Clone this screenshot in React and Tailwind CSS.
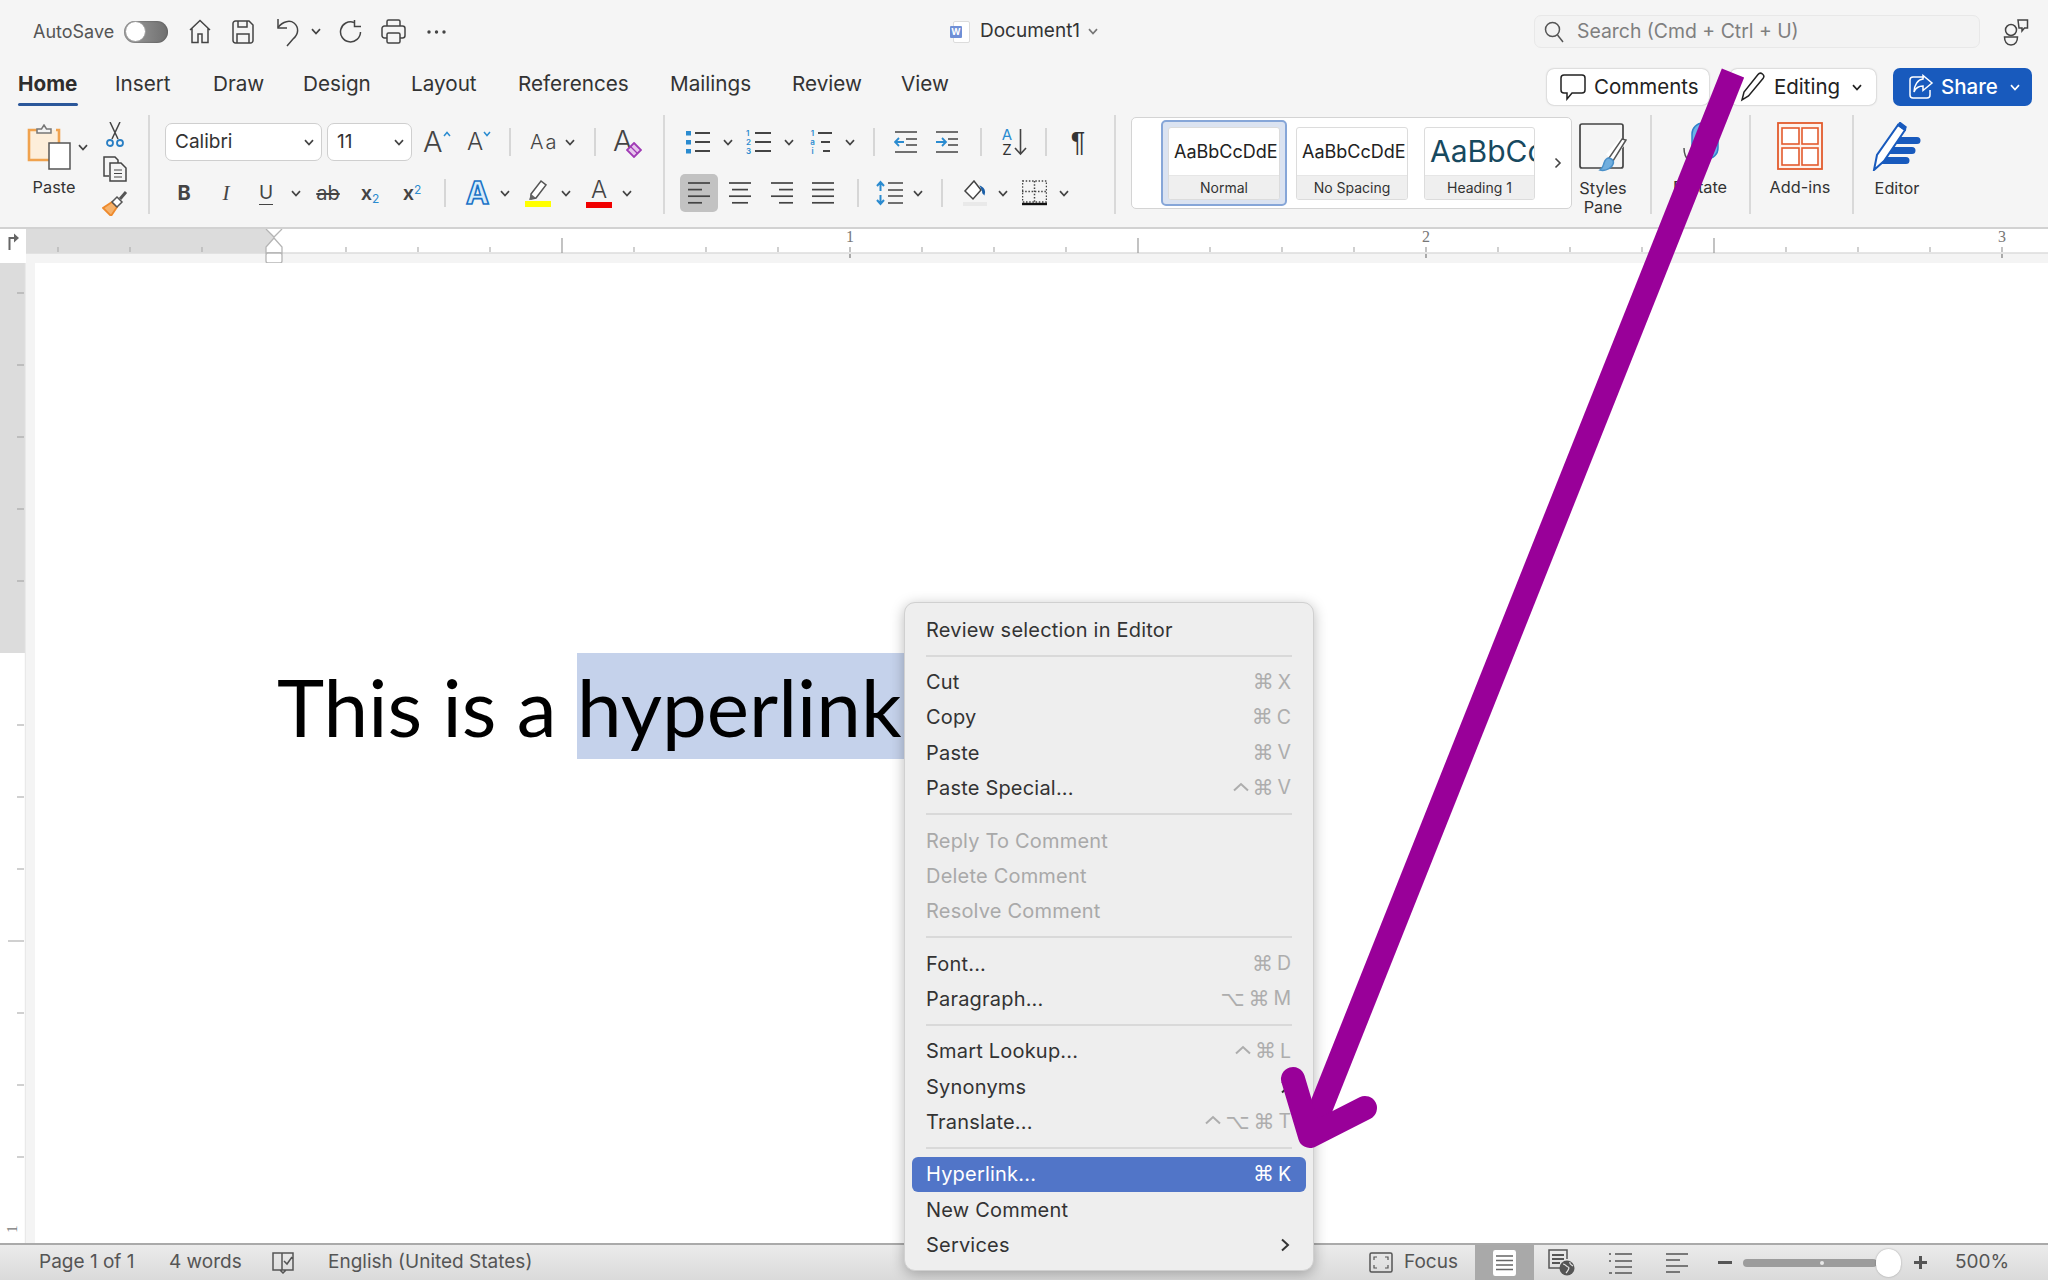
import React from "react";

const Chev = ({ className = "", color = "#444" }) => (
  <svg width="10" height="7" viewBox="0 0 10 7" className={"shrink-0 " + className}>
    <path d="M1 1.2 5 5.5 9 1.2" fill="none" stroke={color} strokeWidth="1.7" />
  </svg>
);

const RowSep = ({ className = "" }) => <div className={"w-[2px] h-[28px] shrink-0 bg-[#d6d6d6] " + className} />;
const GroupSep = () => <div className="w-[2px] h-[99px] mt-[11px] shrink-0 bg-[#d9d9d9]" />;

const Ic = ({ w, h, className = "", children }) => (
  <svg width={w} height={h} viewBox={`0 0 ${w} ${h}`} fill="none" stroke="#444" strokeWidth="1.5" className={"shrink-0 " + className}>
    {children}
  </svg>
);

const AlignIcon = ({ kind, className = "" }) => {
  const rows = {
    left: [[0, 22], [0, 14], [0, 22], [0, 14]],
    center: [[0, 22], [3, 19], [0, 22], [3, 19]],
    right: [[0, 22], [8, 22], [0, 22], [8, 22]],
    just: [[0, 22], [0, 22], [0, 22], [0, 22]],
  }[kind];
  return (
    <Ic w={22} h={26} className={className}>
      {rows.map((r, i) => (
        <line key={i} x1={r[0]} x2={r[1]} y1={3 + i * 6.6} y2={3 + i * 6.6} strokeWidth="1.7" />
      ))}
    </Ic>
  );
};

const StyleCard = ({ w, sample, sampleClass, label }) => (
  <div className={"h-[73px] rounded-[3px] border border-[#dcdcdc] bg-white overflow-hidden flex flex-col shrink-0 " + w}>
    <div className={"h-[49px] flex items-center whitespace-nowrap overflow-hidden pl-[5px] " + sampleClass}>{sample}</div>
    <div className="h-[24px] bg-[#efefef] border-t border-[#e6e6e6] flex items-center justify-center text-[14px] text-[#333]">{label}</div>
  </div>
);

const menu = [
  [["Review selection in Editor"]],
  [["Cut", "⌘ X"], ["Copy", "⌘ C"], ["Paste", "⌘ V"], ["Paste Special...", "⌃ ⌘ V"]],
  [["Reply To Comment", null, true], ["Delete Comment", null, true], ["Resolve Comment", null, true]],
  [["Font...", "⌘ D"], ["Paragraph...", "⌥ ⌘ M"]],
  [["Smart Lookup...", "⌃ ⌘ L"], ["Synonyms", ">"], ["Translate...", "⌃ ⌥ ⌘ T"]],
  [["Hyperlink...", "⌘ K", false, true], ["New Comment"], ["Services", ">"]],
];

const Shortcut = ({ value, active }) => (
  <span className={"flex items-center gap-[4px] font-['DejaVu_Sans','Inter',sans-serif] text-[20px] tracking-normal whitespace-nowrap " + (active ? "text-white" : "text-[#adadad]")}>
    {value.split(" ").map((tok) =>
      tok === "⌃" ? (
        <svg key={tok} width="16" height="10" viewBox="0 0 16 10" className="shrink-0 mb-[3px]">
          <path d="M1 8.5 8 2l7 6.5" fill="none" stroke="#adadad" strokeWidth="2" />
        </svg>
      ) : tok === "⌘" || tok === "⌥" ? (
        <span key={tok} className="text-[21px] leading-[24px]">{tok}</span>
      ) : (
        <span key={tok} className="font-['Inter',sans-serif] text-[19.5px]">{tok}</span>
      )
    )}
  </span>
);

const ContextMenu = () => (
  <div className="absolute left-[904px] top-[602px] w-[410px] h-[669px] rounded-[11px] bg-[#eeeeee] border border-[#d0d0d0] shadow-[0_3px_14px_rgba(0,0,0,0.28)] pt-[9px] text-[20px] tracking-[0.2px] font-['Inter',sans-serif]">
    {menu.map((group, gi) => (
      <div key={gi}>
        {gi > 0 && <div className="h-[2px] bg-[#d9d9d9] mx-[21px] my-[7.6px]" />}
        {group.map(([label, sc, disabled, active]) => (
          <div
            key={label}
            className={
              "h-[35.3px] flex items-center justify-between pl-[14px] pr-[15px] mx-[7px] rounded-[6px] " +
              (active ? "bg-[#5175c8] text-white" : disabled ? "text-[#a9a9a9]" : "text-[#333]")
            }
          >
            <span>{label}</span>
            {sc === ">" ? (
              <svg width="10" height="14" viewBox="0 0 10 14" className="mr-[1px]">
                <path d="M2 1.5 8 7 2 12.5" fill="none" stroke="#333" strokeWidth="2" />
              </svg>
            ) : sc ? (
              <Shortcut value={sc} active={active} />
            ) : null}
          </div>
        ))}
      </div>
    ))}
  </div>
);

const RulerH = () => {
  const ticks = [];
  for (let k = -3; k < 25; k++) {
    const x = 248 + 72 * k;
    if (k === 0 || k % 8 === 0) continue;
    if (k % 4 === 0) ticks.push(<line key={k} x1={x} x2={x} y1={9} y2={24} stroke="#9a9a9a" strokeWidth="1.2" />);
    else ticks.push(<line key={k} x1={x} x2={x} y1={18} y2={23} stroke="#b0b0b0" strokeWidth="1.2" />);
  }
  return (
    <svg width="2022" height="34" viewBox="0 0 2022 34" className="block shrink-0">
      <rect x="0" y="0" width="2022" height="24" fill="#ffffff" />
      <rect x="0" y="0" width="248" height="24" fill="#dcdcdc" />
      <rect x="0" y="24" width="2022" height="10" fill="#f4f4f4" />
      <line x1="0" x2="2022" y1="24" y2="24" stroke="#dddddd" strokeWidth="1.5" />
      {ticks}
      {[1, 2, 3].map((n) => (
        <g key={n}>
          <text x={248 + 576 * n} y="13" fontSize="16" fill="#777" textAnchor="middle" fontFamily="Liberation Serif, serif">{n}</text>
          <line x1={248 + 576 * n} x2={248 + 576 * n} y1={18} y2={23} stroke="#9a9a9a" strokeWidth="1.2" />
          <line x1={248 + 576 * n} x2={248 + 576 * n} y1={25} y2={29} stroke="#777" strokeWidth="1.2" />
        </g>
      ))}
      <path d="M240 0 248 8 256 0" fill="#fff" stroke="#b5b5b5" strokeWidth="1.3" />
      <path d="M248 9 256 18V24H240V18Z" fill="#fff" stroke="#b5b5b5" strokeWidth="1.3" />
      <rect x="240" y="24" width="16" height="10" rx="2" fill="#fff" stroke="#b5b5b5" strokeWidth="1.3" />
    </svg>
  );
};

const RulerV = () => {
  const items = [];
  for (let k = 0; k < 14; k++) {
    const y = 30 + 72 * k;
    if (y === 390) continue;
    const tall = y === 678;
    const digit = y === 966;
    if (digit) {
      items.push(<text key={k} x="12" y={y + 5} fontSize="15" fill="#777" textAnchor="middle" transform={`rotate(-90 12 ${y})`} fontFamily="Liberation Serif, serif">1</text>);
    } else {
      items.push(<line key={k} x1={tall ? 8 : 17} x2="24" y1={y} y2={y} stroke={y < 390 ? "#a8a8a8" : "#b0b0b0"} strokeWidth="1.2" />);
    }
  }
  return (
    <svg width="26" height="980" viewBox="0 0 26 980" className="block shrink-0">
      <rect width="26" height="980" fill="#ffffff" />
      <rect width="25" height="390" fill="#dcdcdc" />
      {items}
      <line x1="25.3" x2="25.3" y1="0" y2="980" stroke="#e4e4e4" />
    </svg>
  );
};

export default function App() {
  return (
    <div className="relative w-[2048px] h-[1280px] overflow-hidden bg-[#f5f5f5] font-['Inter',sans-serif] text-[#333]">
      {/* Title bar */}
      <div className="flex items-center h-[63px] pl-[33px]">
        <span className="w-[80px] text-[18px] text-[#555] whitespace-nowrap">AutoSave</span>
        <div className="ml-[11px] w-[44px] h-[22px] rounded-full bg-gradient-to-r from-[#a0a0a0] to-[#6f6f6f] flex items-center pl-[1px] shadow-[inset_0_0_2px_rgba(0,0,0,0.4)]">
          <div className="w-[21px] h-[21px] rounded-full bg-white border border-[#999]" />
        </div>
        <Ic w={24} h={25} className="ml-[20px]">
          <path d="M2 11 12 1.5 22 11M4 9v14.5h6V15h4v8.5h6V9" />
        </Ic>
        <Ic w={22} h={24} className="ml-[20px]">
          <path d="M1 3.5A2.5 2.5 0 0 1 3.5 1H17l4 4v15.5a2.5 2.5 0 0 1-2.5 2.5h-15A2.5 2.5 0 0 1 1 20.5Z" />
          <path d="M6 1v6h9V1M5 23v-9h12v9" />
        </Ic>
        <Ic w={24} h={30} className="ml-[22px]">
          <path d="M2 2v9h9" />
          <path d="M2 10.5C7 4 14 3 18 6c5 4 5 11-1 16l-6 7" />
        </Ic>
        <Chev className="ml-[11px]" />
        <Ic w={23} h={26} className="ml-[18px]">
          <path d="M15 3.5A10 10 0 1 0 21.5 13" />
          <path d="M15.5 1v6.5H22" />
        </Ic>
        <Ic w={25} h={25} className="ml-[19px]">
          <path d="M6 7V2.5A1.5 1.5 0 0 1 7.5 1h10A1.5 1.5 0 0 1 19 2.5V7" />
          <path d="M6 19H3.5A2.5 2.5 0 0 1 1 16.5v-7A2.5 2.5 0 0 1 3.5 7h18A2.5 2.5 0 0 1 24 9.5v7a2.5 2.5 0 0 1-2.5 2.5H19" />
          <rect x="6" y="14" width="13" height="10" rx="1.5" />
        </Ic>
        <Ic w={21} h={6} className="ml-[20px]">
          <circle cx="3" cy="3" r="1.7" fill="#444" stroke="none" />
          <circle cx="10.5" cy="3" r="1.7" fill="#444" stroke="none" />
          <circle cx="18" cy="3" r="1.7" fill="#444" stroke="none" />
        </Ic>
        <div className="ml-[503px] w-[20px] h-[22px] relative shrink-0 flex items-center">
          <div className="absolute left-[3px] top-0 w-[17px] h-[22px] bg-white border border-[#dcdcdc] rounded-[2px]" />
          <div className="relative w-[12px] h-[12px] bg-[#6f8fd6] text-white text-[9px] font-bold leading-[12px] text-center rounded-[1px]">W</div>
        </div>
        <span className="ml-[10px] w-[100px] text-[19px] text-[#333] whitespace-nowrap">Document1</span>
        <Chev className="ml-[8px]" color="#777" />
        <div className="ml-[436px] w-[446px] h-[33px] rounded-[7px] bg-[#f3f3f3] border border-[#e8e8e8] flex items-center pl-[9px] shrink-0">
          <Ic w={20} h={22} className="">
            <circle cx="8.5" cy="8.5" r="7" stroke="#555" />
            <path d="M13.5 14 19 21" stroke="#555" />
          </Ic>
          <span className="ml-[13px] text-[19.4px] text-[#7f7f7f] whitespace-nowrap">Search (Cmd + Ctrl + U)</span>
        </div>
        <Ic w={26} h={28} className="ml-[23px]">
          <circle cx="8" cy="12" r="5.5" />
          <path d="M1.5 19h13c0 4-2 8-6.5 8s-6.5-4-6.5-8Z" />
          <path d="M15 2h9.5v8h-3l-2.5 3v-3h-3Z" />
        </Ic>
      </div>

      {/* Tabs + action buttons */}
      <div className="flex items-start h-[41px] pl-[18px]">
        <div className="flex flex-col pt-[7px] w-[60px]">
          <span className="leading-[28px] text-[20.7px] font-bold text-[#2d2d2d]">Home</span>
          <div className="mt-[5px] h-[3px] rounded-full bg-[#2b579a]" />
        </div>
        {[
          ["Insert", "ml-[37px] w-[61px]"],
          ["Draw", "ml-[37px] w-[52px]"],
          ["Design", "ml-[38px] w-[69px]"],
          ["Layout", "ml-[39px] w-[66px]"],
          ["References", "ml-[41px] w-[111px]"],
          ["Mailings", "ml-[41px] w-[82px]"],
          ["Review", "ml-[40px] w-[70px]"],
          ["View", "ml-[39px] w-[47px]"],
        ].map(([t, c]) => (
          <span key={t} className={"pt-[7px] leading-[28px] text-[20.7px] text-[#333] whitespace-nowrap " + c}>{t}</span>
        ))}
        <div className="ml-auto flex items-center pr-[16px] pt-[5px] text-[20.5px]">
          <div className="w-[162px] h-[36px] rounded-[7px] bg-white shadow-[0_0_2px_rgba(0,0,0,0.35)] flex items-center pl-[13px]">
            <Ic w={26} h={28} className="">
              <path d="M4 2h18a3 3 0 0 1 3 3v12a3 3 0 0 1-3 3H12l-5 6v-6H4a3 3 0 0 1-3-3V5a3 3 0 0 1 3-3Z" stroke="#222" />
            </Ic>
            <span className="ml-[8px] text-[#222]">Comments</span>
          </div>
          <div className="ml-[21px] w-[146px] h-[36px] rounded-[7px] bg-white shadow-[0_0_2px_rgba(0,0,0,0.35)] flex items-center pl-[9px]">
            <Ic w={26} h={30} className="">
              <path d="M3 28 5 20 19 2.5a2.5 2.5 0 0 1 5 4L9.5 24Z" stroke="#222" />
            </Ic>
            <span className="ml-[9px] text-[#222]">Editing</span>
            <Chev className="ml-[12px]" color="#222" />
          </div>
          <div className="ml-[17px] w-[139px] h-[38px] rounded-[7px] bg-[#185abd] flex items-center pl-[15px] text-white">
            <Ic w={26} h={26} className="">
              <path d="M16 3h-11a3 3 0 0 0-3 3v15a3 3 0 0 0 3 3h14a3 3 0 0 0 3-3v-5" stroke="#fff" />
              <path d="M15 5V1.5l9 7.5-9 7.5V12C11 12 8 13 6 18c0-7 4-12.5 9-13Z" stroke="#fff" />
            </Ic>
            <span className="ml-[7px] font-medium">Share</span>
            <Chev className="ml-[12px]" color="#fff" />
          </div>
        </div>
      </div>

      {/* Ribbon */}
      <div className="flex h-[123px] border-b-0">
        {/* Clipboard */}
        <div className="w-[148px] shrink-0 flex">
          <div className="ml-[27px] w-[56px] shrink-0 pt-[20px]">
            <div className="flex items-center">
              <Ic w={44} h={46} className="">
                <path d="M29 6h3v30H2V6h8" stroke="#f0a24e" strokeWidth="2.6" fill="#fdeeda" />
                <path d="M10 9V5h4.5L17 1l2.5 4H24v4Z" stroke="#777" fill="#f3f3f3" />
                <rect x="22" y="19" width="21" height="26" fill="#fff" stroke="#555" />
              </Ic>
              <Chev className="ml-[7px]" />
            </div>
            <div className="mt-[8px] -ml-[21px] w-[96px] text-center text-[16.3px] leading-[19px]">Paste</div>
          </div>
          <div className="ml-[23px] flex flex-col gap-[8px] pt-[18px]">
            <Ic w={18} h={26} className="">
              <path d="M4 0 12 17M14 0 6 17" />
              <circle cx="4" cy="21" r="3" stroke="#2a7fc4" strokeWidth="1.8" />
              <circle cx="14" cy="21" r="3" stroke="#2a7fc4" strokeWidth="1.8" />
            </Ic>
            <Ic w={26} h={26} className="-ml-[4px]">
              <path d="M7 20H2V1h11l3 3v3" />
              <path d="M8 7h11l5 5v13H8Z" />
              <path d="M12 14h8M12 17.5h8M12 21h8" strokeWidth="1.2" />
            </Ic>
            <Ic w={26} h={26} className="-ml-[4px]">
              <path d="M10 12 1 18l8 8 6-9Z" fill="#f6b26b" stroke="#ee8a2c" strokeWidth="1.8" />
              <path d="M10 12 15 17 20 12l-5-5Z" stroke="#555" fill="#fff" />
              <path d="M18 9 24 2" stroke="#555" strokeWidth="3" />
            </Ic>
          </div>
        </div>
        <GroupSep />

        {/* Font */}
        <div className="w-[513px] shrink-0 flex flex-col gap-[13px] pt-[19px]">
          <div className="flex items-center h-[38px]">
            <div className="ml-[15px] w-[157px] h-[38px] rounded-[7px] bg-white border border-[#cfcfcf] flex items-center justify-between pl-[9px] pr-[7px] text-[19px]">
              Calibri<Chev />
            </div>
            <div className="ml-[5px] w-[85px] h-[38px] rounded-[7px] bg-white border border-[#cfcfcf] flex items-center justify-between pl-[9px] pr-[7px] text-[19px]">
              11<Chev />
            </div>
            <div className="ml-[11px] w-[27px] flex items-start text-[29px] font-light leading-[32px] text-[#444]">
              A<svg width="8" height="6" viewBox="0 0 8 6" className="mt-[5px] shrink-0"><path d="M1 5 4 1.5 7 5" fill="none" stroke="#2a8bd0" strokeWidth="1.5" /></svg>
            </div>
            <div className="ml-[17px] w-[25px] flex items-start text-[24px] font-light leading-[32px] text-[#444]">
              A<svg width="8" height="6" viewBox="0 0 8 6" className="mt-[5px] shrink-0"><path d="M1 1 4 4.5 7 1" fill="none" stroke="#2a8bd0" strokeWidth="1.5" /></svg>
            </div>
            <RowSep className="ml-[17px]" />
            <span className="ml-[19px] w-[30px] text-[20px] tracking-[2px] font-light whitespace-nowrap text-[#444]">Aa</span>
            <Chev className="ml-[5px]" />
            <RowSep className="ml-[19px]" />
            <div className="ml-[17px] w-[29px] h-[32px] relative shrink-0 text-[29px] font-light leading-[30px] text-[#444]">
              A
              <svg width="16" height="16" viewBox="0 0 16 16" className="absolute right-0 bottom-0">
                <path d="M8 1 15 8 8 15 1 8Z" fill="#e6c6ec" stroke="#a03ab5" strokeWidth="1.8" />
                <path d="M4.5 4.5 11.5 11.5" stroke="#a03ab5" strokeWidth="1.2" />
              </svg>
            </div>
          </div>
          <div className="flex items-center h-[38px] text-[#444]">
            <span className="ml-[27px] w-[14px] text-center text-[20px] font-bold leading-[24px]">B</span>
            <span className="ml-[28px] w-[14px] text-center text-[21px] italic font-['Liberation_Serif',serif] leading-[24px]">I</span>
            <span className="ml-[26px] w-[14px] text-center text-[19px] leading-[22px] border-b-[1.5px] border-[#444]">U</span>
            <Chev className="ml-[18px]" />
            <span className="ml-[15px] w-[24px] text-center text-[20px] leading-[24px] line-through">ab</span>
            <span className="ml-[20px] w-[20px] text-center text-[20px] font-semibold leading-[24px]">x<sub className="text-[12px] text-[#2a8bd0] font-normal">2</sub></span>
            <span className="ml-[22px] w-[20px] text-center text-[20px] font-semibold leading-[24px]">x<sup className="text-[12px] text-[#2a8bd0] font-normal">2</sup></span>
            <RowSep className="ml-[22px]" />
            <span className="ml-[19px] w-[25px] text-center text-[31px] font-bold leading-[32px] text-[#d6ecfa] [-webkit-text-stroke:1.6px_#1a73c7]">A</span>
            <Chev className="ml-[10px]" />
            <div className="ml-[15px] w-[26px] flex flex-col items-center shrink-0">
              <Ic w={22} h={22} className="">
                <path d="M4 15 14 2l5 4L9 19l-5 1Z" fill="#fff" stroke="#555" />
                <path d="M4 15 2 21l7-2Z" fill="#666" stroke="none" />
              </Ic>
              <div className="w-[26px] h-[6px] bg-[#ffff00]" />
            </div>
            <Chev className="ml-[10px]" />
            <div className="ml-[15px] w-[26px] flex flex-col items-center shrink-0">
              <span className="text-[24px] font-light leading-[22px]">A</span>
              <div className="w-[26px] h-[6px] mt-[1px] bg-[#f00000]" />
            </div>
            <Chev className="ml-[10px]" />
          </div>
        </div>
        <GroupSep />

        {/* Paragraph */}
        <div className="w-[449px] shrink-0 flex flex-col gap-[13px] pt-[19px]">
          <div className="flex items-center h-[38px]">
            <Ic w={24} h={26} className="ml-[21px]">
              <rect x="0" y="2" width="5" height="4.5" fill="#2a8bd0" stroke="none" />
              <rect x="0" y="11" width="5" height="4.5" fill="#2a8bd0" stroke="none" />
              <rect x="0" y="20" width="5" height="4.5" fill="#2a8bd0" stroke="none" />
              <path d="M9 4h15M9 13h15M9 22h15" strokeWidth="1.8" />
            </Ic>
            <Chev className="ml-[13px]" />
            <div className="ml-[13px] w-[25px] h-[26px] flex shrink-0 items-center">
              <div className="w-[8px] text-[8px] leading-[9px] font-semibold text-[#2a8bd0]">1<br />2<br />3</div>
              <Ic w={17} h={26} className="">
                <path d="M1 4h16M1 13h16M1 22h16" strokeWidth="1.8" />
              </Ic>
            </div>
            <Chev className="ml-[13px]" />
            <div className="ml-[14px] w-[24px] h-[26px] flex shrink-0 items-center">
              <div className="w-[9px] text-[8px] leading-[9px] font-semibold text-[#2a8bd0] text-center">1<br />a<br />i</div>
              <Ic w={15} h={26} className="">
                <path d="M1 4h14M4 13h9M6 22h7" strokeWidth="1.8" />
              </Ic>
            </div>
            <Chev className="ml-[13px]" />
            <RowSep className="ml-[18px]" />
            <Ic w={23} h={26} className="ml-[19px]">
              <path d="M1 3h22M12 10h11M12 16h11M1 23h22" strokeWidth="1.7" />
              <path d="M10 13H1M5 9l-4 4 4 4" stroke="#2a8bd0" strokeWidth="1.8" />
            </Ic>
            <Ic w={22} h={26} className="ml-[19px]">
              <path d="M0 3h22M12 10h10M12 16h10M0 23h22" strokeWidth="1.7" />
              <path d="M0 13h9M6 9l4 4-4 4" stroke="#2a8bd0" strokeWidth="1.8" />
            </Ic>
            <RowSep className="ml-[22px]" />
            <div className="ml-[18px] w-[27px] h-[28px] flex shrink-0 items-center">
              <div className="w-[14px] text-[15px] leading-[15px] text-center">
                <span className="text-[#2a8bd0]">A</span><br />Z
              </div>
              <Ic w={13} h={28} className="">
                <path d="M6.5 1v25M1 20l5.5 6 5.5-6" strokeWidth="1.6" />
              </Ic>
            </div>
            <RowSep className="ml-[18px]" />
            <span className="ml-[23px] w-[16px] text-center text-[27px] font-['Liberation_Sans',sans-serif] leading-[28px] text-[#333]">¶</span>
          </div>
          <div className="flex items-center h-[38px]">
            <div className="ml-[15px] w-[38px] h-[38px] rounded-[5px] bg-[#c2c2c2] flex items-center justify-center shrink-0">
              <AlignIcon kind="left" />
            </div>
            <AlignIcon kind="center" className="ml-[11px]" />
            <AlignIcon kind="right" className="ml-[20px]" />
            <AlignIcon kind="just" className="ml-[19px]" />
            <RowSep className="ml-[23px]" />
            <Ic w={27} h={26} className="ml-[17px]">
              <path d="M12 3h15M12 10h15M12 16h15M12 23h15" strokeWidth="1.7" />
              <path d="M4.5 2v9M1 6l3.5-4L8 6M4.5 15v9M1 20l3.5 4L8 20" stroke="#2a8bd0" strokeWidth="2" />
            </Ic>
            <Chev className="ml-[10px]" />
            <RowSep className="ml-[18px]" />
            <Ic w={24} h={26} className="ml-[20px]">
              <path d="M11 1 2 11l8 8 8-9Z" fill="#fff" stroke="#444" />
              <path d="M18 7c2 1 4 3 3 7l-1-1c0-3-1-4-2-6Z" fill="#1a5fa8" stroke="#1a5fa8" />
              <rect x="0" y="22" width="24" height="4" fill="#e9e9e9" stroke="none" />
            </Ic>
            <Chev className="ml-[11px]" />
            <Ic w={25} h={26} className="ml-[14px]">
              <rect x="0.5" y="1" width="24" height="21" strokeDasharray="1.5 1.7" stroke="#444" />
              <path d="M12.5 1v21M0 11.5h25" strokeDasharray="1.5 1.7" stroke="#444" />
              <path d="M0 24h25" stroke="#111" strokeWidth="2.4" />
            </Ic>
            <Chev className="ml-[12px]" />
          </div>
        </div>
        <GroupSep />

        {/* Styles gallery */}
        <div className="ml-[15px] mt-[13px] w-[441px] h-[92px] shrink-0 rounded-[5px] bg-white border border-[#d4d4d4] flex items-center pl-[29px]">
          <div className="w-[126px] h-[86px] rounded-[5px] border-2 border-[#86a6d8] bg-[#dbe3f1] flex items-center justify-center shrink-0">
            <StyleCard w="w-[112px]" sample="AaBbCcDdE" sampleClass="text-[18px] text-[#222]" label="Normal" />
          </div>
          <div className="ml-[9px]">
            <StyleCard w="w-[112px]" sample="AaBbCcDdE" sampleClass="text-[18px] text-[#222]" label="No Spacing" />
          </div>
          <div className="ml-[16px]">
            <StyleCard w="w-[111px]" sample="AaBbCc" sampleClass="text-[30px] text-[#17495f]" label="Heading 1" />
          </div>
          <svg width="8" height="12" viewBox="0 0 8 12" className="ml-[19px] shrink-0">
            <path d="M1.5 1.5 6 6l-4.5 4.5" fill="none" stroke="#444" strokeWidth="1.6" />
          </svg>
        </div>

        {/* Styles Pane */}
        <div className="ml-[3px] w-[56px] shrink-0 flex flex-col items-center pt-[19px]">
          <Ic w={48} h={49} className="">
            <rect x="1" y="1" width="43" height="44" rx="2" stroke="#444" strokeWidth="1.7" />
            <path d="M44 18 30 34" stroke="#fff" strokeWidth="8" />
            <path d="M47 17 34 38l-4-3L43 16Z" fill="#fff" stroke="#555" />
            <path d="M30 35c4 1 6 4 3 8-3 4-9 5-12 4 3-2 3-4 4-7 1-3 3-5 5-5Z" fill="#70aede" stroke="#4a90c9" />
          </Ic>
          <div className="mt-[7px] text-center text-[16.3px] leading-[19px] whitespace-nowrap">Styles<br />Pane</div>
        </div>
        <div className="ml-[19px]"><GroupSep /></div>

        {/* Dictate */}
        <div className="ml-[8px] w-[80px] shrink-0 flex flex-col items-center pt-[18px]">
          <Ic w={48} h={48} className="">
            <rect x="16" y="1" width="26" height="36" rx="11" fill="#6bb1e8" stroke="#2f80c9" />
            <path d="M8 26c0 12 8 18 20 18" stroke="#555" />
          </Ic>
          <div className="mt-[8px] text-center text-[16.3px] leading-[19px]">Dictate</div>
        </div>
        <div className="ml-[9px]"><GroupSep /></div>

        {/* Add-ins */}
        <div className="ml-[9px] w-[80px] shrink-0 flex flex-col items-center pt-[18px]">
          <Ic w={46} h={48} className="">
            <rect x="1" y="1" width="44" height="46" fill="#fdf3ee" stroke="#e35b2d" strokeWidth="1.8" />
            <rect x="5" y="6" width="17" height="16" fill="#fff" stroke="#e35b2d" strokeWidth="1.6" />
            <rect x="25" y="6" width="16" height="16" fill="#fff" stroke="#e35b2d" strokeWidth="1.6" />
            <rect x="5" y="26" width="17" height="17" fill="#fff" stroke="#e35b2d" strokeWidth="1.6" />
            <rect x="25" y="26" width="16" height="17" fill="#fff" stroke="#e35b2d" strokeWidth="1.6" />
          </Ic>
          <div className="mt-[8px] text-center text-[16.3px] leading-[19px]">Add-ins</div>
        </div>
        <div className="ml-[12px]"><GroupSep /></div>

        {/* Editor */}
        <div className="ml-[8px] w-[70px] shrink-0 flex flex-col items-center pt-[18px]">
          <Ic w={50} h={49} className="">
            <path d="M26 15h19a3.5 3.5 0 0 1 0 7H21ZM19 25h21a3.5 3.5 0 0 1 0 7H14ZM12 35h22a3.5 3.5 0 0 1 0 7H8Z" fill="#185abd" stroke="none" />
            <path d="M2 48 5 33 26 3l7 5L12 39Z" fill="#fff" stroke="#185abd" strokeWidth="2" />
            <path d="M26 3l2-2.5 6 4.5-1 3Z" fill="#185abd" stroke="#185abd" />
          </Ic>
          <div className="mt-[8px] text-center text-[16.3px] leading-[19px]">Editor</div>
        </div>
      </div>

      <div className="h-[2px] bg-[#d2d2d2]" />

      {/* Ruler */}
      <div className="flex h-[34px]">
        <div className="w-[26px] h-[34px] bg-white shrink-0 flex items-start justify-center pt-[3px]">
          <Ic w={12} h={18} className="">
            <path d="M2.5 18V6H8" stroke="#666" strokeWidth="2" />
            <path d="M7 1.5 12 6 7 10.5Z" fill="#666" stroke="none" />
          </Ic>
        </div>
        <RulerH />
      </div>

      {/* Document area */}
      <div className="flex h-[980px]">
        <RulerV />
        <div className="w-[9px] shrink-0 bg-[#f4f4f4]" />
        <div className="flex-1 bg-white pt-[390px] pl-[242px]">
          <div className="h-[106px] flex items-center whitespace-nowrap text-[80px] text-black font-['Lato','Open_Sans',sans-serif]">
            <span>This is a&nbsp;</span>
            <span className="bg-[#c5d2eb] h-[106px] leading-[106px] pr-[10px]">hyperlink</span>
          </div>
        </div>
      </div>

      {/* Status bar */}
      <div className="flex items-center h-[37px] border-t-2 border-[#aaaaaa] bg-gradient-to-b from-[#ebebeb] to-[#dadada] text-[19px] text-[#555]">
        <span className="ml-[39px] w-[96px] whitespace-nowrap">Page 1 of 1</span>
        <span className="ml-[34px] w-[71px] whitespace-nowrap">4 words</span>
        <Ic w={22} h={22} className="ml-[32px]">
          <path d="M1 1h9v17H1ZM10 1h11v17H10M8 18l3 3 3-3M12 9l3 3 5-7" stroke="#555" />
        </Ic>
        <span className="ml-[34px] w-[205px] whitespace-nowrap">English (United States)</span>
        <Ic w={24} h={21} className="ml-[836px]">
          <rect x="1" y="1" width="22" height="19" rx="1.5" stroke="#555" />
          <path d="M5 8V5h3M16 5h3v3M5 13v3h3M16 16h3v-3" stroke="#555" strokeWidth="1.2" />
        </Ic>
        <span className="ml-[11px] w-[54px] whitespace-nowrap">Focus</span>
        <div className="ml-[17px] w-[59px] self-stretch bg-[#a9a9a9] flex items-center justify-center shrink-0">
          <Ic w={23} h={26} className="">
            <rect x="0.8" y="0.8" width="21.4" height="24.4" rx="1.5" fill="#fff" stroke="#fff" />
            <path d="M3 6h17M3 10.5h17M3 15h17M3 19.5h17" stroke="#666" strokeWidth="1.5" />
          </Ic>
        </div>
        <Ic w={27} h={27} className="ml-[14px]">
          <path d="M16 19H1V1h18v9" stroke="#555" />
          <path d="M4 6h12M4 10h12M4 14h8" stroke="#555" strokeWidth="1.8" />
          <circle cx="19" cy="19" r="7.5" fill="#555" stroke="none" />
          <path d="M15 15c3 0 3 3 5 3s0 4-2 6M22 13c-1 2 2 3 3 4" stroke="#e4e4e4" strokeWidth="1.2" />
        </Ic>
        <Ic w={24} h={24} className="ml-[33px]">
          <path d="M1 3h2M7 3h17M7 10h17M1 10h2M7 16h17M7 22h17M1 22h3" stroke="#555" strokeWidth="1.5" />
        </Ic>
        <Ic w={22} h={24} className="ml-[34px]">
          <path d="M0 3h22M0 9h14M0 15h22M0 21h14" stroke="#555" strokeWidth="1.7" />
        </Ic>
        <div className="ml-[30px] w-[14px] h-[3px] bg-[#555] shrink-0" />
        <div className="ml-[11px] w-[158px] h-[26px] flex items-center shrink-0">
          <div className="w-[134px] h-[8px] rounded-full bg-[#9c9c9c] flex items-center pl-[77px] shrink-0">
            <div className="w-[4px] h-[4px] rounded-full bg-[#e8e8e8]" />
          </div>
          <div className="-ml-[1px] w-[25px] h-[28px] rounded-full bg-white shadow-[0_0_2px_rgba(0,0,0,0.3)] shrink-0" />
        </div>
        <svg width="13" height="13" viewBox="0 0 13 13" className="ml-[13px] shrink-0">
          <path d="M6.5 0v13M0 6.5h13" stroke="#555" strokeWidth="3" />
        </svg>
        <span className="ml-[28px] w-[54px] whitespace-nowrap">500%</span>
      </div>

      <ContextMenu />

      {/* Purple annotation arrow */}
      <svg width="2048" height="1280" viewBox="0 0 2048 1280" className="absolute left-0 top-0 pointer-events-none" fill="none" stroke="#990099" strokeWidth="24">
        <path d="M1733 73 1312 1130" />
        <path d="M1293 1079 1310 1136 1365 1108" strokeWidth="24" strokeLinecap="round" strokeLinejoin="round" />
      </svg>
    </div>
  );
}
